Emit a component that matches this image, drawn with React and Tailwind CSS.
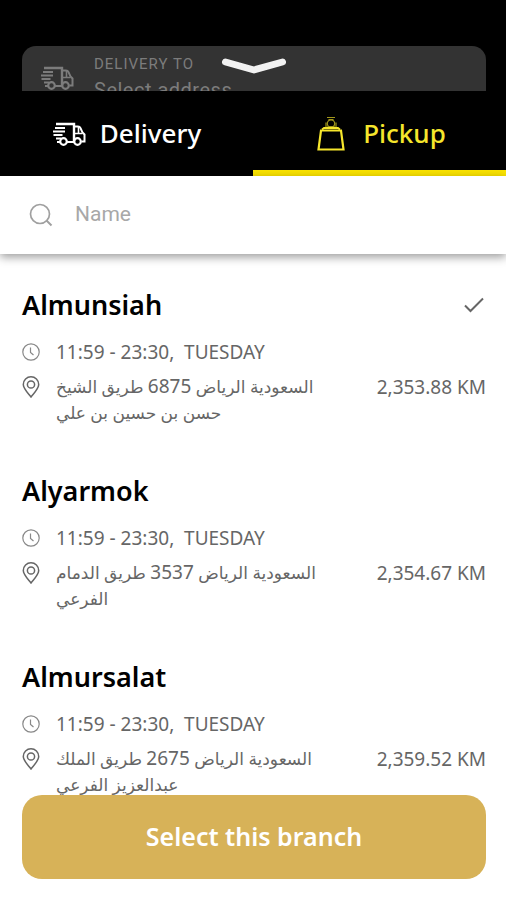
import { useState } from "react";

const branches = [
  {
    name: "Almunsiah",
    area: "السعودية الرياض",
    number: "6875",
    street: "طريق الشيخ حسن بن حسين بن علي",
    distance: "2,353.88 KM",
  },
  {
    name: "Alyarmok",
    area: "السعودية الرياض",
    number: "3537",
    street: "طريق الدمام الفرعي",
    distance: "2,354.67 KM",
  },
  {
    name: "Almursalat",
    area: "السعودية الرياض",
    number: "2675",
    street: "طريق الملك عبدالعزيز الفرعي",
    distance: "2,359.52 KM",
  },
];

function TruckIcon({ className }) {
  return (
    <svg viewBox="0 0 34 24" fill="none" stroke="currentColor" strokeWidth="2" className={className} aria-hidden="true">
      <path d="M4 2h18v17.500" strokeWidth="2.400" />
      <path d="M22 4.500h4c1.200 0 2 .6 2.500 1.700l2 4.300 2 2v7h-3" />
      <path d="M22 11.500h8.500M26.500 5v6.500" strokeWidth="1.600" />
      <path d="M3 6h10M1 9.500h12M1.500 13h9M4 16.500h5" strokeWidth="1.900" />
      <path d="M5 20h3M15 20h7" />
      <circle cx="11.500" cy="19.500" r="3.300" strokeWidth="2.200" />
      <circle cx="25.500" cy="19.500" r="3.300" strokeWidth="2.200" />
    </svg>
  );
}

function BagIcon({ className }) {
  return (
    <svg viewBox="0 0 28 36" fill="none" stroke="currentColor" className={className} aria-hidden="true">
      <path d="M4 14.500h20l2.500 19h-25z" strokeWidth="2.200" />
      <path d="M5 13.500l2-1.500h14l2 1.500" strokeWidth="1.800" />
      <g strokeWidth="1.200" opacity="0.650">
        <path d="M10 1.500h8M11.500 3.500h5" />
        <circle cx="14" cy="7.500" r="3.700" />
        <path d="M9 6.500v5M19 6.500v5M11 12v-1.500h6V12" />
      </g>
    </svg>
  );
}

function SearchIcon({ className }) {
  return (
    <svg viewBox="0 0 24 24" fill="none" stroke="currentColor" strokeWidth="1.700" className={className} aria-hidden="true">
      <circle cx="11" cy="11" r="9.500" />
      <path d="M17.500 17.500l5 5" strokeWidth="2" />
    </svg>
  );
}

function ClockIcon({ className }) {
  return (
    <svg viewBox="0 0 18 18" fill="none" stroke="currentColor" strokeWidth="1.200" className={className} aria-hidden="true">
      <circle cx="9" cy="9" r="8.200" />
      <path d="M8.500 4.500v5l3 2.500" />
    </svg>
  );
}

function PinIcon({ className }) {
  return (
    <svg viewBox="0 0 18 22" fill="none" stroke="currentColor" strokeWidth="1.500" className={className} aria-hidden="true">
      <path d="M9 21C5.500 16.500 1.300 12.500 1.300 8.500a7.700 7.700 0 0 1 15.400 0C16.700 12.500 12.500 16.500 9 21z" />
      <circle cx="9" cy="8.500" r="3.600" />
    </svg>
  );
}

function CheckIcon({ className }) {
  return (
    <svg viewBox="0 0 20 16" fill="none" stroke="currentColor" strokeWidth="2" className={className} aria-hidden="true">
      <path d="M1 8.500l5.500 5.500L19 1.500" />
    </svg>
  );
}

function Branch({ branch, selected, onSelect }) {
  return (
    <button
      type="button"
      aria-pressed={selected}
      onClick={onSelect}
      className="block w-full text-left text-[19px] text-[#666]"
    >
      <span className="flex h-10 items-center justify-between">
        <span className="text-[27px] font-semibold text-black">{branch.name}</span>
        {selected && <CheckIcon className="mr-[2px] h-4 w-5" />}
      </span>
      <span className="mt-[13px] flex h-7 items-center gap-4">
        <ClockIcon className="h-[18px] w-[18px] text-[#888]" />
        <span className="whitespace-pre">11:59 - 23:30,  TUESDAY</span>
      </span>
      <span className="mt-2 flex h-[52px] items-start gap-4 leading-[26px]">
        <span className="flex h-[26px] shrink-0 items-center">
          <PinIcon className="h-[22px] w-[18px]" />
        </span>
        <span dir="rtl" className="w-[270px] text-left text-[17px]">
          {branch.area} <span className="text-[19px] leading-none">{branch.number}</span> {branch.street}
        </span>
        <span className="ml-auto whitespace-nowrap">{branch.distance}</span>
      </span>
    </button>
  );
}

export default function App() {
  const [tab, setTab] = useState("pickup");
  const [query, setQuery] = useState("");
  const [selected, setSelected] = useState("Almunsiah");

  const visible = branches.filter((b) => b.name.toLowerCase().includes(query.toLowerCase()));

  return (
    <div className="flex h-screen flex-col bg-white font-['Noto_Sans','DejaVu_Sans',sans-serif]">
      <header className="shrink-0 bg-black pt-[46px]">
        {/* Address card, half hidden behind the sheet */}
        <div className="relative mr-5 ml-[22px] flex h-[45px] gap-5 overflow-hidden rounded-t-[14px] bg-[#333] pl-[18px] text-[#7c7c7c]">
          <TruckIcon className="mt-5 h-6 w-[34px] shrink-0" />
          <div className="pt-2 font-[Roboto,sans-serif] whitespace-nowrap">
            <p className="text-[15px] leading-5 tracking-[1px]">DELIVERY TO</p>
            <p className="mt-1 text-[20px] leading-6 tracking-wide">Select address</p>
          </div>
          <button type="button" aria-label="Close" className="absolute top-3 left-1/2 -translate-x-1/2 text-[#f2f2f2]">
            <svg viewBox="0 0 66 16" fill="none" stroke="currentColor" strokeWidth="7" strokeLinecap="round" strokeLinejoin="round" className="h-4 w-[66px]">
              <path d="M4.500 4l28.500 8 28.500-8" />
            </svg>
          </button>
        </div>

        <nav className="grid h-[85px] grid-cols-2 text-[26px] font-medium">
          <button
            type="button"
            onClick={() => setTab("delivery")}
            className={
              tab === "delivery"
                ? "flex items-center justify-center gap-[14px] border-b-6 border-[#fae300] pt-[6px] text-[#f6e62c]"
                : "flex items-center justify-center gap-[14px] border-b-6 border-transparent pt-[6px] text-white"
            }
          >
            <TruckIcon className="h-6 w-[34px]" />
            Delivery
          </button>
          <button
            type="button"
            onClick={() => setTab("pickup")}
            className={
              tab === "pickup"
                ? "flex items-center justify-center gap-[18px] border-b-6 border-[#fae300] pt-[6px] pl-1 text-[#f6e62c]"
                : "flex items-center justify-center gap-[18px] border-b-6 border-transparent pt-[6px] pl-1 text-white"
            }
          >
            <BagIcon className="h-9 w-7" />
            Pickup
          </button>
        </nav>
      </header>

      <label className="relative flex h-[78px] shrink-0 items-center gap-[22px] bg-white px-[29px] shadow-[0_3px_9px_rgba(0,0,0,0.4)]">
        <SearchIcon className="h-6 w-6 text-[#a0a0a0]" />
        <input
          type="text"
          aria-label="Name"
          placeholder="Name"
          value={query}
          onChange={(e) => setQuery(e.target.value)}
          className="min-w-0 flex-1 font-[Roboto,sans-serif] text-[21px] outline-none placeholder:text-[#a8a8a8]"
        />
      </label>

      <main className="min-h-0 flex-1 overflow-hidden pt-[31px] pr-5 pl-[22px]">
        <ul className="flex flex-col gap-[45px]">
          {visible.map((b) => (
            <li key={b.name}>
              <Branch branch={b} selected={selected === b.name} onSelect={() => setSelected(b.name)} />
            </li>
          ))}
        </ul>
      </main>

      <footer className="shrink-0 pr-5 pb-[21px] pl-[22px]">
        <button type="button" className="h-[84px] w-full rounded-[20px] bg-[#d7b258] text-[25px] font-semibold text-white">
          Select this branch
        </button>
      </footer>
    </div>
  );
}
